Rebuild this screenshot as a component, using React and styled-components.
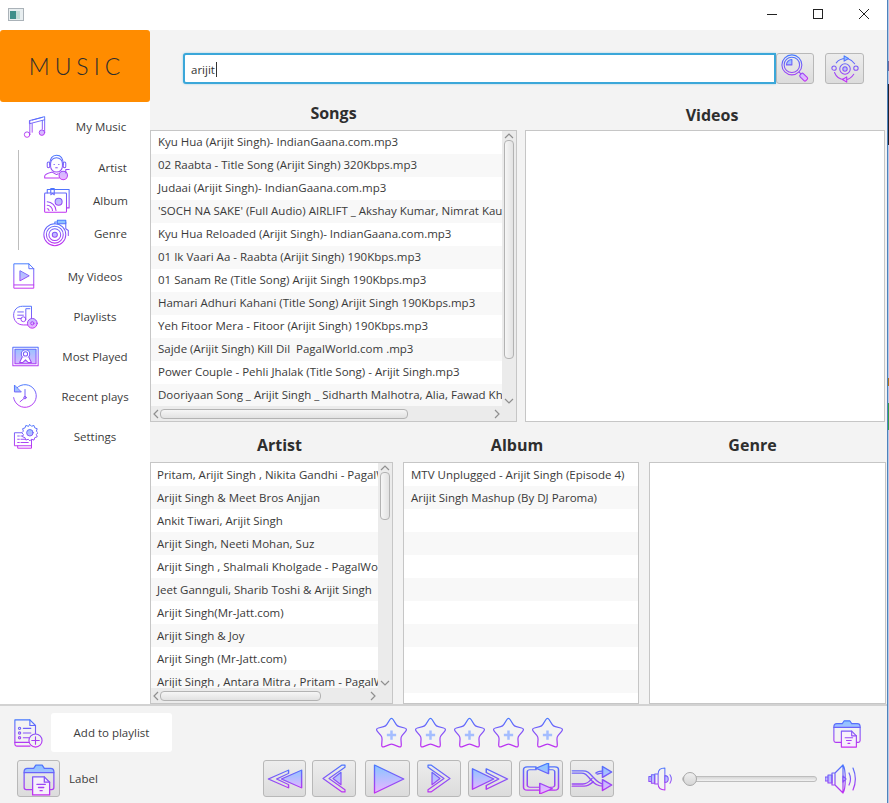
import React from "react";
import styled, { createGlobalStyle } from "styled-components";

const GlobalStyle = createGlobalStyle`
  html, body {
    margin: 0;
    padding: 0;
    background: #f3f3f3;
  }
  * {
    box-sizing: border-box;
  }
`;

const songs = [
  "Kyu Hua (Arijit Singh)- IndianGaana.com.mp3",
  "02 Raabta - Title Song (Arijit Singh) 320Kbps.mp3",
  "Judaai (Arijit Singh)- IndianGaana.com.mp3",
  "'SOCH NA SAKE' (Full Audio) AIRLIFT _ Akshay Kumar, Nimrat Kaur",
  "Kyu Hua Reloaded (Arijit Singh)- IndianGaana.com.mp3",
  "01 Ik Vaari Aa - Raabta (Arijit Singh) 190Kbps.mp3",
  "01 Sanam Re (Title Song) Arijit Singh 190Kbps.mp3",
  "Hamari Adhuri Kahani (Title Song) Arijit Singh 190Kbps.mp3",
  "Yeh Fitoor Mera - Fitoor (Arijit Singh) 190Kbps.mp3",
  "Sajde (Arijit Singh) Kill Dil  PagalWorld.com .mp3",
  "Power Couple - Pehli Jhalak (Title Song) - Arijit Singh.mp3",
  "Dooriyaan Song _ Arijit Singh _ Sidharth Malhotra, Alia, Fawad Khan",
];

const artists = [
  "Pritam, Arijit Singh , Nikita Gandhi - PagalWorld",
  "Arijit Singh & Meet Bros Anjjan",
  "Ankit Tiwari, Arijit Singh",
  "Arijit Singh, Neeti Mohan, Suz",
  "Arijit Singh , Shalmali Kholgade - PagalWorld",
  "Jeet Gannguli, Sharib Toshi & Arijit Singh",
  "Arijit Singh(Mr-Jatt.com)",
  "Arijit Singh & Joy",
  "Arijit Singh (Mr-Jatt.com)",
  "Arijit Singh , Antara Mitra , Pritam - PagalWorld",
];

const albums = [
  "MTV Unplugged - Arijit Singh (Episode 4)",
  "Arijit Singh Mashup (By DJ Paroma)",
  "", "", "", "", "", "", "", "",
];

const Window = styled.div`
  position: relative;
  width: 889px;
  height: 803px;
  display: flex;
  flex-direction: column;
  overflow: hidden;
  background: #f3f3f3;
  color: #333;
  font-family: "Open Sans", "Liberation Sans", sans-serif;
  font-size: 11.5px;
`;

/* edge of the window behind, lies over the right side of this one */
const BehindEdge = styled.div`
  position: absolute;
  top: 0;
  right: 0;
  bottom: 0;
  width: 2px;
  border-left: 1px solid #4f81bd;
  background: linear-gradient(
    #b4cce6 61px,
    #6a6a9a 61px,
    #6a6a9a 71px,
    #b4cce6 71px,
    #b4cce6 84px,
    #1c2430 84px,
    #1c2430 145px,
    #b4cce6 145px,
    #b4cce6 378px,
    #a87a20 378px,
    #a87a20 386px,
    #b4cce6 386px,
    #b4cce6 403px,
    #2f9e50 403px,
    #2f9e50 430px,
    #b4cce6 430px
  );
`;

const TitleBar = styled.div`
  height: 30px;
  flex: none;
  background: #fff;
  display: flex;
  align-items: center;
  padding-left: 8px;
`;

const WinButtons = styled.div`
  margin-left: auto;
  display: flex;
  padding-right: 20px;
  gap: 36px;
  padding-bottom: 2px;
`;

const Body = styled.div`
  flex: 1;
  min-height: 0;
  display: flex;
`;

const Sidebar = styled.nav`
  width: 150px;
  flex: none;
  background: #fff;
  display: flex;
  flex-direction: column;
`;

const Brand = styled.div`
  height: 72px;
  flex: none;
  background: #ff8c00;
  border-radius: 3px;
  display: flex;
  align-items: center;
  justify-content: center;
  font-family: "Lato", sans-serif;
  font-weight: 300;
  font-size: 23px;
  letter-spacing: 5px;
  color: #2e2e2e;
  padding: 0 0 1px 4px;
`;

const NavRow = styled.div`
  display: grid;
  grid-template-columns: ${(p) => p.$icon || 40}px 1fr;
  align-items: center;
  height: ${(p) => p.$h || 40}px;
  padding-left: ${(p) => p.$left || 0}px;
`;

const NavLabel = styled.span`
  text-align: center;
  white-space: nowrap;
  color: #3c3c3c;
  transform: translateX(${(p) => p.$shift || 0}px);
`;

const SubNav = styled.div`
  margin: 0 0 6px 18px;
  border-left: 1px solid #bdbdbd;
  height: 100px;
  display: flex;
  flex-direction: column;
  justify-content: center;
`;

const Content = styled.main`
  flex: 1;
  min-width: 0;
  display: flex;
  flex-direction: column;
`;

const SearchRow = styled.div`
  height: 72px;
  flex: none;
  display: flex;
  align-items: flex-start;
  padding: 23px 0 0 33px;
`;

const SearchField = styled.div`
  width: 593px;
  height: 31px;
  background: #fff;
  border: 2px solid #3ba7d9;
  border-radius: 3px 0 0 3px;
  box-shadow: 0 0 2px rgba(59, 167, 217, 0.5);
  display: flex;
  align-items: center;
  padding: 1px 0 0 6px;
`;

const Caret = styled.span`
  width: 1px;
  height: 15px;
  background: #333;
  margin-left: 1px;
`;

const ToolButton = styled.button`
  width: ${(p) => p.$w || 44}px;
  height: ${(p) => p.$h || 37}px;
  flex: none;
  padding: 0;
  display: flex;
  align-items: center;
  justify-content: center;
  background: linear-gradient(#ededed, #dcdcdc);
  border: 1px solid #b8b8b8;
  border-radius: 3px;
  margin-left: ${(p) => p.$gap || 0}px;
`;

const Panels = styled.div`
  display: grid;
  grid-template-columns: ${(p) => p.$columns};
  column-gap: ${(p) => p.$gap}px;
`;

const Panel = styled.section`
  display: flex;
  flex-direction: column;
  min-width: 0;
`;

const Heading = styled.h2`
  margin: 0;
  height: ${(p) => p.$h}px;
  display: flex;
  align-items: center;
  justify-content: center;
  padding: ${(p) => p.$pad || "0"};
  font-size: 16px;
  font-weight: 700;
  color: #2e2e2e;
`;

const ListFrame = styled.div`
  height: ${(p) => p.$h}px;
  background: #fff;
  border: 1px solid #c6c6c6;
  display: grid;
  grid-template-columns: minmax(0, 1fr) ${(p) => (p.$scroll ? "14px" : "0")};
  grid-template-rows: minmax(0, 1fr) ${(p) => (p.$scroll ? "15px" : "0")};
  overflow: hidden;
`;

const Rows = styled.div`
  overflow: hidden;
  min-width: 0;
`;

const Row = styled.div`
  height: 23px;
  line-height: ${(p) => p.$lh}px;
  padding-left: ${(p) => p.$pad}px;
  white-space: pre;
  color: #3a3a3a;
  background: ${(p) => (p.$odd ? "#f8f8f8" : "#fff")};
`;

const ScrollTrack = styled.div`
  background: #ebebeb;
  display: flex;
  flex-direction: ${(p) => (p.$horizontal ? "row" : "column")};
  align-items: center;
  justify-content: space-between;
`;

const Corner = styled.div`
  background: #ebebeb;
`;

const ThumbV = styled.div`
  width: 10px;
  height: ${(p) => p.$size}px;
  margin-bottom: auto;
  background: linear-gradient(to right, #f6f6f6, #e2e2e2);
  border: 1px solid #b3b3b3;
  border-radius: 4px;
`;

const ThumbH = styled.div`
  height: 10px;
  width: ${(p) => p.$size}px;
  margin-right: auto;
  background: linear-gradient(#f6f6f6, #e2e2e2);
  border: 1px solid #b3b3b3;
  border-radius: 4px;
`;

const Arrow = styled.svg`
  width: ${(p) => (p.$horizontal ? 9 : 10)}px;
  height: ${(p) => (p.$horizontal ? 10 : 9)}px;
  flex: none;
  fill: none;
  stroke: #8f8f8f;
  stroke-width: 1.2;
`;

const Footer = styled.footer`
  height: 99px;
  flex: none;
  border-top: 2px solid #d2d2d2;
  display: flex;
  flex-direction: column;
  padding-top: 7px;
`;

const FooterRow = styled.div`
  display: flex;
  align-items: center;
  height: ${(p) => p.$h}px;
  margin-bottom: ${(p) => p.$mb || 0}px;
`;

const AddPill = styled.div`
  width: 121px;
  height: 39px;
  margin-left: 8px;
  background: #fff;
  border-radius: 3px;
  display: flex;
  align-items: center;
  justify-content: center;
  color: #3c3c3c;
`;

const Stars = styled.div`
  margin-left: 203px;
  display: flex;
  gap: 6px;
`;

const Transport = styled.div`
  margin-left: 164px;
  display: flex;
`;

const SliderWrap = styled.div`
  position: relative;
  width: 135px;
  height: 6px;
  margin: 0 8px 0 7px;
  background: linear-gradient(#d6d6d6, #f2f2f2);
  border: 1px solid #bdbdbd;
  border-radius: 3px;
`;

const SliderThumb = styled.div`
  position: absolute;
  left: 0;
  top: -5px;
  width: 14px;
  height: 14px;
  border-radius: 50%;
  background: linear-gradient(#efefef, #d6d6d6);
  border: 1px solid #a8a8a8;
`;

const PlainLabel = styled.span`
  margin-left: 9px;
  width: 30px;
  color: #3c3c3c;
`;

const Glyph = styled.svg`
  display: block;
  flex: none;
  width: ${(p) => p.$w || 26}px;
  height: ${(p) => p.$h || p.$w || 26}px;
  margin-left: ${(p) => p.$ml || 0}px;
  fill: none;
  stroke: url(#iconStroke);
  stroke-width: ${(p) => p.$sw || 1.2};
  stroke-linecap: round;
  stroke-linejoin: round;
`;

const Defs = styled.svg`
  display: block;
  width: 0;
  height: 0;
`;

const SOFT = "url(#iconSoft)";

function Icon({ w, h, ml, sw, stretch, children }) {
  return (
    <Glyph
      viewBox="0 0 32 32"
      preserveAspectRatio={stretch ? "none" : undefined}
      $w={w}
      $h={h}
      $ml={ml}
      $sw={sw}
    >
      {children}
    </Glyph>
  );
}

function starPath() {
  const pts = [];
  for (let i = 0; i < 10; i++) {
    const r = i % 2 ? 9.5 : 16.5;
    const a = (Math.PI / 5) * i - Math.PI / 2;
    pts.push([16 + r * Math.cos(a), 17.5 + r * Math.sin(a)]);
  }
  let d = "";
  pts.forEach((p, i) => {
    const prev = pts[(i + 9) % 10];
    const next = pts[(i + 1) % 10];
    const t = i % 2 ? 0.2 : 0.3;
    const a = [p[0] + (prev[0] - p[0]) * t, p[1] + (prev[1] - p[1]) * t];
    const b = [p[0] + (next[0] - p[0]) * t, p[1] + (next[1] - p[1]) * t];
    d += `${i ? "L" : "M"}${a[0].toFixed(2)} ${a[1].toFixed(2)}Q${p[0].toFixed(2)} ${p[1].toFixed(2)} ${b[0].toFixed(2)} ${b[1].toFixed(2)}`;
  });
  return d + "Z";
}

const icons = {
  music: (
    <>
      <path d="M10 9 29 4v4L10 13zM10 9v17M29 8v16M13 8.500 26 5" />
      <circle cx="6.500" cy="27" r="3.500" />
      <circle cx="25.500" cy="24.500" r="3.500" fill={SOFT} />
      <path d="M13 13v11M26 9v11" />
    </>
  ),
  artist: (
    <>
      <path d="M8 13C8 6 11 2 16 2s8 4 8 11" />
      <rect x="5" y="10" width="3" height="7" rx="1.500" />
      <rect x="24" y="10" width="3" height="7" rx="1.500" />
      <path d="M9 12c0-4 3-7 7-7s7 3 7 7v3c0 4-3 7-7 7s-7-3-7-7z" />
      <path d="M13 13h.5M18.500 13h.5M15 17h2" />
      <path d="M2 29v-2c0-3 5-4 9-5l5 3 2-1M2 29h17" />
      <circle cx="24" cy="26" r="5" fill={SOFT} />
      <path d="M27 23v-4h4" />
    </>
  ),
  album: (
    <>
      <rect x="3" y="8" width="25" height="22" rx="1" />
      <path d="M6 8V4h25v21h-3M10 8V3h4v7l-2-1.500L10 10" />
      <circle cx="19" cy="18" r="4" fill={SOFT} />
      <path d="M6 26c1 0 2 1 2 2M6 22c3 0 6 3 6 6M6 18c5 0 10 5 10 10" />
    </>
  ),
  genre: (
    <>
      <circle cx="14" cy="18" r="13" />
      <circle cx="14" cy="18" r="10" />
      <circle cx="14" cy="18" r="7" />
      <circle cx="14" cy="18" r="3" fill={SOFT} />
      <path d="M14 5V3h13v8l3 2v6" />
      <rect x="17" y="1" width="10" height="4" fill={SOFT} />
    </>
  ),
  video: (
    <>
      <path d="M4 1h18l6 6v24H4zM22 1v6h6M4 27h24" />
      <path d="M11 10v12l11-6z" fill={SOFT} />
    </>
  ),
  playlist: (
    <>
      <path d="M24 24V4H13C6 4 2 9 2 15s4 12 12 12h6" />
      <path d="M7 11h7M7 15h7M7 19h4M17 19V7h5" />
      <circle cx="14" cy="20" r="3" />
      <circle cx="25" cy="25" r="6" fill={SOFT} />
      <circle cx="25" cy="25" r="2" />
    </>
  ),
  medal: (
    <>
      <rect x="1" y="5" width="30" height="22" />
      <rect x="3.500" y="7.500" width="25" height="17" fill={SOFT} />
      <circle cx="16" cy="13" r="5" fill="#fff" />
      <circle cx="16" cy="13" r="2.500" />
      <path d="M12 17l-3 6h4l3-3 3 3h4l-3-6" fill="#fff" />
    </>
  ),
  recent: (
    <>
      <path d="M6 6a14 14 0 1 1-4 12" />
      <path d="M3 3v8h8z" fill={SOFT} />
      <path d="M16 8v10M16 18l-6 5" />
      <circle cx="16" cy="18" r="1.500" fill={SOFT} />
    </>
  ),
  settings: (
    <>
      <path d="M19 12H3v16h4v3h17V19" />
      <path d="M7 28h17M7 16h2M7 20h2M7 24h2M11 16h4M11 20h8M11 24h9" />
      <path d="M22 2l2 2 3-1 1 3 3 1-1 3 2 2-2 2 1 3-3 1-1 3-3-1-2 2-2-2-3 1-1-3-3-1 1-3-2-2 2-2-1-3 3-1 1-3 3 1z" fill="#fff" />
      <circle cx="22" cy="12" r="4" fill={SOFT} />
    </>
  ),
  search: (
    <>
      <circle cx="12" cy="12" r="11" />
      <circle cx="12" cy="12" r="8.500" />
      <path d="M6 12a6 6 0 0 1 6-6v6z" fill={SOFT} />
      <path d="M20 20l3 3" />
      <rect x="22.500" y="21" width="5" height="9" rx="1.500" transform="rotate(-45 25 25.500)" fill={SOFT} />
    </>
  ),
  sync: (
    <>
      <path d="M6 9C9 5 13 4 17 4M4 20c2 5 6 8 11 8M27 10c-2-3-5-5-8-6M26 22c-2 3-5 6-9 6" />
      <path d="M15 1l5 3-5 3zM18 25l-5 3 5 3z" fill={SOFT} />
      <circle cx="3.500" cy="15" r="2.500" />
      <circle cx="28.500" cy="15" r="2.500" />
      <circle cx="16" cy="16" r="6" />
      <circle cx="16" cy="16" r="2.500" fill={SOFT} />
    </>
  ),
  addList: (
    <>
      <path d="M24 17V8l-6-6H2v26c0 1 1 2 2 2h14" />
      <path d="M18 2v6h6M2 26h15" />
      <circle cx="7" cy="11" r="1.200" />
      <circle cx="7" cy="16" r="1.200" />
      <circle cx="7" cy="21" r="1.200" />
      <path d="M11 11h8M11 16h8M11 21h6" />
      <circle cx="24" cy="24" r="7" fill="#f3f3f3" />
      <path d="M24 20v8M20 24h8" />
    </>
  ),
  folder: (
    <>
      <path d="M2 9c0-2 1-3 3-3h6l2-3h6l2 3h6c2 0 3 1 3 3v1H2z" fill={SOFT} />
      <path d="M2 10v14c0 1 1 2 2 2h6M30 10v14c0 1-1 2-2 2h-2" />
      <path d="M10 14h11l5 5v12H10z" fill="#f7f0fb" />
      <path d="M21 14v5h5M14 21h8M15.500 24h5M17 27h2" />
    </>
  ),
  star: (
    <>
      <path d={starPath()} />
      <path d="M16 14v9M11.500 18.500h9" stroke="#a4bdff" strokeWidth="2.400" strokeLinecap="butt" />
    </>
  ),
  rewind: (
    <>
      <path d="M2 16 19 5v4L9 16l10 7v4z" />
      <path d="M13 16 30 5v22z" fill={SOFT} />
    </>
  ),
  prev: (
    <>
      <path d="M5 16 24 3h3v2L11 16l16 11v2h-3z" />
      <path d="M15 16l8-6v12z" fill={SOFT} />
    </>
  ),
  play: <path d="M4 2 30 16 4 30z" fill={SOFT} />,
  next: (
    <>
      <path d="M27 16 8 3H5v2l16 11L5 27v2h3z" />
      <path d="M17 16l-8-6v12z" fill={SOFT} />
    </>
  ),
  forward: (
    <>
      <path d="M2 5v22l17-11z" fill={SOFT} />
      <path d="M13 5l17 11-17 11v-4l10-7-10-7z" />
    </>
  ),
  repeat: (
    <>
      <path d="M12 4H5C3 4 2 5 2 7v18c0 2 1 3 3 3h10v-3H7c-1 0-2-1-2-2V9c0-1 1-2 2-2h5z" />
      <path d="M22 4h5c2 0 3 1 3 3v18c0 2-1 3-3 3h-4v-3h2c1 0 2-1 2-2V9c0-1-1-2-2-2h-3z" />
      <path d="M22 0 12 5.500 22 11zM15 21l10 5.500L15 32z" fill={SOFT} />
    </>
  ),
  shuffle: (
    <>
      <path d="M1 9h8c4 0 5 2 8 6s5 6 8 6h1M1 11h7c3 0 4 2 7 6s5 6 10 6" />
      <path d="M1 21h8c3 0 5-2 7-5M1 23h9c3 0 5-2 7-4M19 11c2-2 4-2 7-2M20 12c2-1 3-1 5-1" />
      <path d="M24 5l7 5-7 5zM24 17l7 5-7 5z" fill={SOFT} />
    </>
  ),
  speakerLow: (
    <>
      <path d="M4 11h4v10H4zM1 13h3v6H1z" fill={SOFT} />
      <path d="M8 10h4v12H8zM20 3c-4 0-8 2-8 7v12c0 5 4 7 8 7z" />
      <path d="M20 12a4 4 0 0 1 0 8z" fill={SOFT} />
      <path d="M26 11c2 3 2 7 0 10" />
    </>
  ),
  speakerHigh: (
    <>
      <path d="M3 12h4v8H3zM0 14h3v4H0z" fill={SOFT} />
      <path d="M7 10h3v12H7zM10 10 18 2v28l-8-8zM18 2c3 4 3 24 0 28" />
      <path d="M18 13l3 3-3 3z" fill={SOFT} />
      <path d="M24 10c2 4 2 8 0 12M28 5c3 7 3 15 0 22" />
    </>
  ),
};

const navItems = [
  { key: "video", label: "My Videos", w: 26, h: 26, ml: 11 },
  { key: "playlist", label: "Playlists", w: 26, h: 26, ml: 12 },
  { key: "medal", label: "Most Played", w: 27, h: 27, ml: 12 },
  { key: "recent", label: "Recent plays", w: 26, h: 26, ml: 12 },
  { key: "settings", label: "Settings", w: 26, h: 26, ml: 12 },
];

const subItems = [
  { key: "artist", label: "Artist", w: 27, h: 28, ml: 24, shift: 0 },
  { key: "album", label: "Album", w: 28, h: 28, ml: 23, shift: -2 },
  { key: "genre", label: "Genre", w: 27, h: 28, ml: 24, shift: -2 },
];

const transport = [
  { key: "rewind", w: 43, iw: 38, ih: 26 },
  { key: "prev", w: 44, gap: 6, iw: 32, ih: 33 },
  { key: "play", w: 45, gap: 9, iw: 36, ih: 32 },
  { key: "next", w: 44, gap: 7, iw: 32, ih: 33 },
  { key: "forward", w: 44, gap: 7, iw: 40, ih: 30 },
  { key: "repeat", w: 44, gap: 7, iw: 40, ih: 31 },
  { key: "shuffle", w: 44, gap: 7, iw: 42, ih: 35 },
];

function Chevron({ dir }) {
  const d = {
    up: "M1 7 5 3l4 4",
    down: "M1 2l4 4 4-4",
    left: "M7 1 3 5l4 4",
    right: "M2 1l4 4-4 4",
  }[dir];
  const horizontal = dir === "left" || dir === "right";
  return (
    <Arrow $horizontal={horizontal} viewBox={horizontal ? "0 0 9 10" : "0 0 10 9"}>
      <path d={d} />
    </Arrow>
  );
}

function ListPanel({ items, height, pad, lh, thumbV, thumbH }) {
  const scroll = Boolean(thumbV);
  return (
    <ListFrame $h={height} $scroll={scroll}>
      <Rows>
        {items.map((text, i) => (
          <Row key={i} $odd={i % 2 === 1} $pad={pad} $lh={lh}>
            {text}
          </Row>
        ))}
      </Rows>
      {scroll && (
        <>
          <ScrollTrack>
            <Chevron dir="up" />
            <ThumbV $size={thumbV} />
            <Chevron dir="down" />
          </ScrollTrack>
          <ScrollTrack $horizontal>
            <Chevron dir="left" />
            <ThumbH $size={thumbH} />
            <Chevron dir="right" />
          </ScrollTrack>
          <Corner />
        </>
      )}
    </ListFrame>
  );
}

export default function App() {
  return (
    <>
      <GlobalStyle />
      <Defs aria-hidden="true">
        <defs>
          <linearGradient id="iconStroke" gradientUnits="userSpaceOnUse" x1="0" y1="0" x2="0" y2="32">
            <stop offset="0" stopColor="#3f7dff" />
            <stop offset="1" stopColor="#c92cf0" />
          </linearGradient>
          <linearGradient id="iconSoft" gradientUnits="userSpaceOnUse" x1="0" y1="4" x2="0" y2="28">
            <stop offset="0" stopColor="#8fc4ff" />
            <stop offset="1" stopColor="#e3b6ff" />
          </linearGradient>
        </defs>
      </Defs>
      <Window>
        <TitleBar>
          <svg width="16" height="14" viewBox="0 0 16 14">
            <rect x="0.500" y="0.500" width="15" height="12" fill="#e8eef0" stroke="#aab2b8" />
            <rect x="2" y="3" width="6" height="8" fill="#3f8f8a" />
            <rect x="8" y="3" width="4" height="8" fill="#c4dcd8" />
          </svg>
          <WinButtons>
            <svg width="10" height="10" viewBox="0 0 10 10">
              <path d="M0 5.500h10" stroke="#222" />
            </svg>
            <svg width="10" height="10" viewBox="0 0 10 10">
              <rect x="0.500" y="0.500" width="9" height="9" fill="none" stroke="#222" />
            </svg>
            <svg width="10" height="10" viewBox="0 0 10 10">
              <path d="M0 0l10 10M10 0 0 10" stroke="#222" />
            </svg>
          </WinButtons>
        </TitleBar>
        <Body>
          <Sidebar>
            <Brand>MUSIC</Brand>
            <NavRow $icon={48} $left={22} $h={48}>
              <Icon w={25} h={26}>{icons.music}</Icon>
              <NavLabel $shift={-9}>My Music</NavLabel>
            </NavRow>
            <SubNav>
              {subItems.map((it) => (
                <NavRow key={it.key} $icon={56} $h={33}>
                  <Icon w={it.w} h={it.h} ml={it.ml}>{icons[it.key]}</Icon>
                  <NavLabel $shift={it.shift}>{it.label}</NavLabel>
                </NavRow>
              ))}
            </SubNav>
            {navItems.map((it) => (
              <NavRow key={it.key} $icon={40}>
                <Icon w={it.w} h={it.h} ml={it.ml}>{icons[it.key]}</Icon>
                <NavLabel>{it.label}</NavLabel>
              </NavRow>
            ))}
          </Sidebar>
          <Content>
            <SearchRow>
              <SearchField>
                arijit
                <Caret />
              </SearchField>
              <ToolButton $w={38} $h={31}>
                <Icon w={29} h={29}>{icons.search}</Icon>
              </ToolButton>
              <ToolButton $w={39} $h={31} $gap={11}>
                <Icon w={28} h={28}>{icons.sync}</Icon>
              </ToolButton>
            </SearchRow>
            <Panels $columns="367px 360px" $gap={8}>
              <Panel>
                <Heading $h={28} $pad="0 0 6px">Songs</Heading>
                <ListPanel items={songs} height={292} pad={7} lh={22} thumbV={219} thumbH={248} />
              </Panel>
              <Panel>
                <Heading $h={28} $pad="0 0 2px 14px">Videos</Heading>
                <ListFrame $h={292} />
              </Panel>
            </Panels>
            <Panels $columns="243px 236px 237px" $gap={10}>
              <Panel>
                <Heading $h={40} $pad="6px 0 0 16px">Artist</Heading>
                <ListPanel items={artists} height={242} pad={6} lh={24} thumbV={48} thumbH={161} />
              </Panel>
              <Panel>
                <Heading $h={40} $pad="6px 8px 0 0">Album</Heading>
                <ListPanel items={albums} height={242} pad={7} lh={24} />
              </Panel>
              <Panel>
                <Heading $h={40} $pad="6px 30px 0 0">Genre</Heading>
                <ListFrame $h={242} />
              </Panel>
            </Panels>
          </Content>
        </Body>
        <Footer>
          <FooterRow $h={39} $mb={8}>
            <Icon w={30} h={32} ml={13}>{icons.addList}</Icon>
            <AddPill>Add to playlist</AddPill>
            <Stars>
              {[0, 1, 2, 3, 4].map((i) => (
                <Icon key={i} w={33} h={33}>{icons.star}</Icon>
              ))}
            </Stars>
            <Icon w={30} h={32} ml={268}>{icons.folder}</Icon>
          </FooterRow>
          <FooterRow $h={37}>
            <ToolButton $w={43} $h={37} $gap={17}>
              <Icon w={34} h={34}>{icons.folder}</Icon>
            </ToolButton>
            <PlainLabel>Label</PlainLabel>
            <Transport>
              {transport.map((b) => (
                <ToolButton key={b.key} $w={b.w} $h={37} $gap={b.gap}>
                  <Icon w={b.iw} h={b.ih} stretch>{icons[b.key]}</Icon>
                </ToolButton>
              ))}
            </Transport>
            <Icon w={27} h={28} ml={34}>{icons.speakerLow}</Icon>
            <SliderWrap>
              <SliderThumb />
            </SliderWrap>
            <Icon w={32} h={32}>{icons.speakerHigh}</Icon>
          </FooterRow>
        </Footer>
        <BehindEdge />
      </Window>
    </>
  );
}
